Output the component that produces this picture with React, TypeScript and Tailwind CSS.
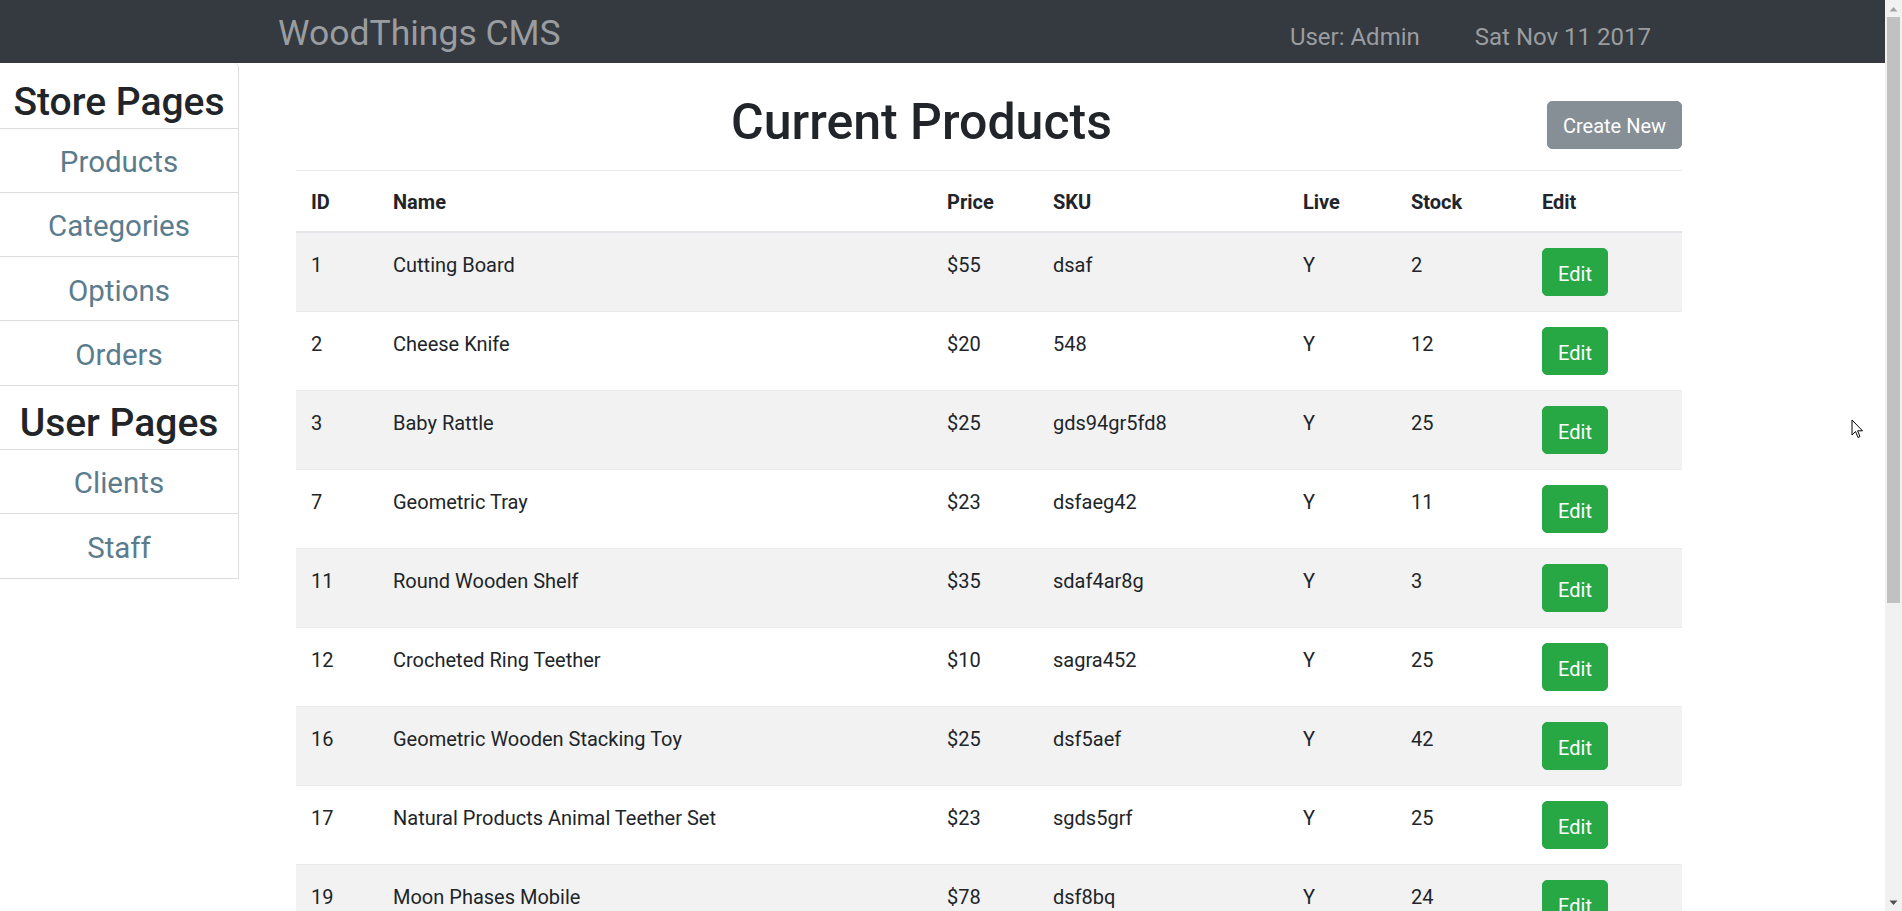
import React from "react";

const rows = [
  { id: "1", name: "Cutting Board", price: "$55", sku: "dsaf", live: "Y", stock: "2" },
  { id: "2", name: "Cheese Knife", price: "$20", sku: "548", live: "Y", stock: "12" },
  { id: "3", name: "Baby Rattle", price: "$25", sku: "gds94gr5fd8", live: "Y", stock: "25" },
  { id: "7", name: "Geometric Tray", price: "$23", sku: "dsfaeg42", live: "Y", stock: "11" },
  { id: "11", name: "Round Wooden Shelf", price: "$35", sku: "sdaf4ar8g", live: "Y", stock: "3" },
  { id: "12", name: "Crocheted Ring Teether", price: "$10", sku: "sagra452", live: "Y", stock: "25" },
  { id: "16", name: "Geometric Wooden Stacking Toy", price: "$25", sku: "dsf5aef", live: "Y", stock: "42" },
  { id: "17", name: "Natural Products Animal Teether Set", price: "$23", sku: "sgds5grf", live: "Y", stock: "25" },
  { id: "19", name: "Moon Phases Mobile", price: "$78", sku: "dsf8bq", live: "Y", stock: "24" },
];

const headers = [
  { label: "ID", w: "w-[82px]" },
  { label: "Name", w: "w-[554px]" },
  { label: "Price", w: "w-[106px]" },
  { label: "SKU", w: "w-[250px]" },
  { label: "Live", w: "w-[108px]" },
  { label: "Stock", w: "w-[131px]" },
  { label: "Edit", w: "w-[155px]" },
];

function SideItem({ label }: { label: string }) {
  return (
    <div className="flex h-[64.3px] items-center justify-center border-b border-[#dddddd] pt-[5px] text-[29.5px] leading-none text-[#5b7c8d]">
      {label}
    </div>
  );
}

function SideHeading({ label, tall }: { label: string; tall?: boolean }) {
  return (
    <div
      className={
        (tall ? "h-[65.6px] pt-[14px] " : "h-[64.3px] pt-[12px] ") +
        "flex items-center justify-center border-b border-[#dddddd] text-[39px] font-medium leading-none text-[#212529]"
      }
    >
      {label}
    </div>
  );
}

const td = "border-t border-[#e9ecef] px-[15px] pt-[17px] pb-[13px] align-top";

export default function App() {
  return (
    <div className="relative flex h-[911px] w-[1902px] overflow-hidden bg-white font-['Roboto',_sans-serif] text-[#212529]">
      <div className="flex w-[1885px] flex-col">
        {/* Navbar */}
        <div className="flex h-[63px] shrink-0 items-center bg-[#343a40] pl-[278px] pr-[234px]">
          <div className="pt-[5px] text-[35.5px] leading-none text-[#9a9da0]">WoodThings CMS</div>
          <div className="ml-auto flex items-center gap-[55px] pt-[10px] text-[24px] leading-none text-[#9a9da0]">
            <span>User: Admin</span>
            <span>Sat Nov 11 2017</span>
          </div>
        </div>

        <div className="flex flex-1">
          {/* Sidebar */}
          <div className="w-[239px] shrink-0 self-start">
            <div className="rounded-tr-[5px] border-r border-[#dddddd]">
              <SideHeading label="Store Pages" tall />
              <SideItem label="Products" />
              <SideItem label="Categories" />
              <SideItem label="Options" />
              <SideItem label="Orders" />
              <SideHeading label="User Pages" />
              <SideItem label="Clients" />
              <SideItem label="Staff" />
            </div>
          </div>

          {/* Main */}
          <div className="ml-[57px] w-[1386px] shrink-0">
            <div className="flex h-[107px] items-start">
              <h1 className="mt-[29px] flex-1 text-center text-[50px] font-medium leading-[60px]">
                Current Products
              </h1>
              <button className="mt-[37.7px] h-[48px] w-[135px] rounded-[5px] border border-[#868e96] bg-[#868e96] pt-[2px] text-[20px] leading-[30px] text-white">
                Create New
              </button>
            </div>

            <table className="w-[1386px] table-fixed border-collapse text-left text-[20px] leading-[30px]">
              <thead>
                <tr>
                  {headers.map((h) => (
                    <th
                      key={h.label}
                      className={
                        h.w +
                        " border-t border-b-2 border-t-[#e9ecef] border-b-[#e2e6ea] px-[15px] pt-[16px] pb-[14px] align-bottom font-bold"
                      }
                    >
                      {h.label}
                    </th>
                  ))}
                </tr>
              </thead>
              <tbody>
                {rows.map((r, i) => (
                  <tr key={r.id} className={i % 2 === 0 ? "bg-[#f2f2f2]" : "bg-white"}>
                    <td className={td}>{r.id}</td>
                    <td className={td}>{r.name}</td>
                    <td className={td}>{r.price}</td>
                    <td className={td}>{r.sku}</td>
                    <td className={td}>{r.live}</td>
                    <td className={td}>{r.stock}</td>
                    <td className="border-t border-[#e9ecef] p-[15px] align-top">
                      <button className="flex h-[48px] w-[66px] items-center justify-center rounded-[5px] border border-[#28a745] bg-[#28a745] pt-[3px] text-[20px] leading-[30px] text-white">
                        Edit
                      </button>
                    </td>
                  </tr>
                ))}
              </tbody>
            </table>
          </div>
        </div>
      </div>

      {/* Window scrollbar */}
      <div className="flex h-[911px] w-[17px] shrink-0 flex-col bg-[#f1f1f1]">
        <div className="flex h-[17px] items-center justify-center">
          <svg width="9" height="6" viewBox="0 0 9 6">
            <path d="M0.5 5.5 L4.5 1 L8.5 5.5 Z" fill="#a3a3a3" />
          </svg>
        </div>
        <div className="mx-[2px] h-[586px] bg-[#c1c1c1]" />
        <div className="flex-1" />
        <div className="flex h-[17px] items-center justify-center">
          <svg width="9" height="6" viewBox="0 0 9 6">
            <path d="M0.5 0.5 L4.5 5 L8.5 0.5 Z" fill="#505050" />
          </svg>
        </div>
      </div>

      {/* Mouse cursor */}
      <svg
        className="absolute left-[1851px] top-[419px]"
        width="13"
        height="21"
        viewBox="0 0 13 21"
      >
        <path
          d="M1 1 L1 16 L4.5 12.5 L7 18.5 L9 17.6 L6.6 11.8 L11.5 11.8 Z"
          fill="#ffffff"
          stroke="#000000"
          strokeWidth="1"
          strokeLinejoin="round"
        />
      </svg>
    </div>
  );
}
